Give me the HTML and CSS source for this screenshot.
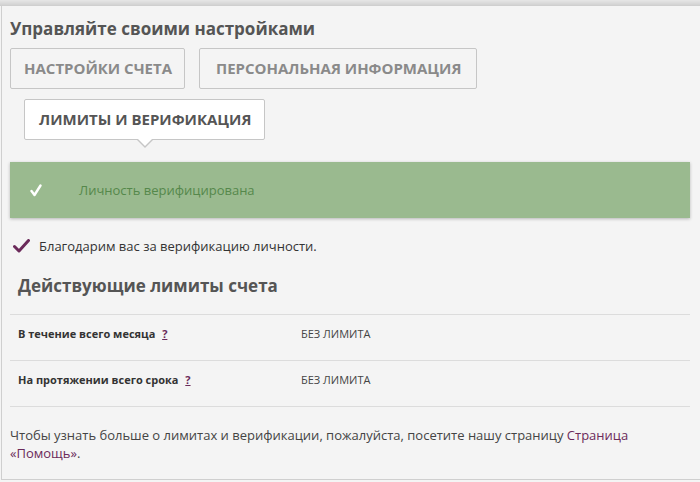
FILE: index.html
```html
<!DOCTYPE html>
<html lang="ru">
<head>
<meta charset="utf-8">
<link rel="stylesheet" href="styles.css">
</head>
<body>
<div class="topbar"></div>
<div class="page">
  <h1 class="title">Управляйте своими настройками</h1>
  <div class="tabs">
    <div class="tab">НАСТРОЙКИ СЧЕТА</div>
    <div class="tab wide">ПЕРСОНАЛЬНАЯ ИНФОРМАЦИЯ</div>
    <div class="tab active">ЛИМИТЫ И ВЕРИФИКАЦИЯ</div>
  </div>
  <div class="alert">
    <svg class="alert-check" width="12" height="13" viewBox="0 0 12 13"><path d="M1.5 7 L4.5 11 L10.5 1.5" fill="none" stroke="#fff" stroke-width="2.4" stroke-linecap="round" stroke-linejoin="round"/></svg>
    <span class="alert-text">Личность верифицирована</span>
  </div>
  <div class="thanks">
    <svg class="thanks-check" width="17" height="14" viewBox="0 0 17 14"><path d="M1.5 7.5 L6 12 L15.5 1.5" fill="none" stroke="#6b2a5a" stroke-width="3" stroke-linecap="round" stroke-linejoin="round"/></svg>
    <span>Благодарим вас за верификацию личности.</span>
  </div>
  <h2 class="subtitle">Действующие лимиты счета</h2>
  <div class="limits">
    <div class="row">
      <div class="label">В течение всего месяца <a class="help">?</a></div>
      <div class="value">БЕЗ ЛИМИТА</div>
    </div>
    <div class="row">
      <div class="label">На протяжении всего срока <a class="help">?</a></div>
      <div class="value">БЕЗ ЛИМИТА</div>
    </div>
  </div>
  <p class="note">Чтобы узнать больше о лимитах и верификации, пожалуйста, посетите нашу страницу <a class="link">Страница</a><br><a class="link">«Помощь»</a>.</p>
</div>
</body>
</html>
```
FILE: styles.css
```css
* { box-sizing: border-box; }
html, body { margin: 0; padding: 0; }
body {
  background: #f4f4f4;
  font-family: "Open Sans", "Liberation Sans", sans-serif;
  color: #444;
  width: 700px;
  height: 482px;
  overflow: hidden;
}
.topbar {
  height: 6px;
  background: linear-gradient(#e6e6e6, #d2d2d2);
  border-bottom: 1px solid #cfcfcf;
}
.page {
  margin-left: 1px;
  border-left: 1px solid #cfcfcf;
  border-bottom: 1px solid #cfcfcf;
  height: 474px;
  padding: 0 10px 0 8px;
}
.title {
  margin: 0;
  padding-top: 12px;
  font-size: 17px;
  font-weight: 700;
  color: #555;
  line-height: 22px;
}
.tabs {
  display: flex;
  flex-wrap: wrap;
  gap: 10px 14px;
  margin-top: 8px;
  width: 500px;
}
.tab {
  height: 41px;
  padding: 0 12px 0 13px;
  border: 1px solid #c6c6c6;
  border-radius: 2px;
  font-size: 15px;
  font-weight: 700;
  color: #8a8a8a;
  line-height: 39px;
  white-space: nowrap;
}
.tab.wide { padding: 0 15px 0 16px; }
.tab.active {
  position: relative;
  background: #fff;
  color: #555;
  margin-left: 14px;
  height: 41px;
  padding: 0 13px 0 14px;
}
.tab.active::before,
.tab.active::after {
  content: "";
  position: absolute;
  left: 50%;
  width: 0;
  height: 0;
  border-style: solid;
}
.tab.active::before {
  top: 100%;
  margin-left: -9px;
  border-width: 9px 9px 0 9px;
  border-color: #c6c6c6 transparent transparent transparent;
}
.tab.active::after {
  top: 100%;
  margin-left: -8px;
  margin-top: -1px;
  border-width: 8px 8px 0 8px;
  border-color: #fff transparent transparent transparent;
}
.alert {
  margin-top: 22px;
  height: 56px;
  background: #9aba8f;
  box-shadow: 0 1px 3px rgba(0,0,0,0.25);
  display: flex;
  align-items: center;
  padding-left: 20px;
}
.alert-check { flex: none; }
.alert-text {
  margin-left: 37px;
  font-size: 13px;
  color: #55884b;
}
.thanks {
  display: flex;
  align-items: center;
  margin-top: 19px;
  margin-left: 3px;
  font-size: 13px;
  color: #333;
  gap: 9px;
}
.subtitle {
  margin: 20px 0 0 8px;
  font-size: 17px;
  font-weight: 700;
  color: #555;
  line-height: 22px;
}
.limits {
  margin-top: 17px;
  border-top: 1px solid #dcdcdc;
}
.row {
  display: flex;
  align-items: flex-start;
  height: 46px;
  padding-top: 11px;
  line-height: 15px;
  border-bottom: 1px solid #dcdcdc;
  font-size: 11px;
}
.label {
  width: 291px;
  padding-left: 8px;
  font-weight: 700;
  color: #333;
}
.help {
  color: #6b2a5a;
  text-decoration: underline;
  margin-left: 4px;
}
.value {
  color: #444;
}
.note {
  margin: 19px 0 0 0;
  font-size: 13px;
  line-height: 18px;
  color: #444;
}
.link {
  color: #6b2a5a;
}
```
